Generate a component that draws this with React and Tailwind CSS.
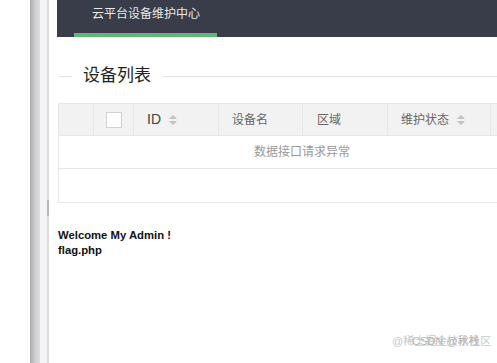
import React from "react";

const cjk = { fontFamily: '"Liberation Sans", "Noto Sans CJK SC", sans-serif' };

function SortIcon() {
  return (
    <span className="inline-flex flex-col items-center ml-[8px] gap-[2px]">
      <span className="w-0 h-0 border-x-[4px] border-x-transparent border-b-[4px] border-b-[#c2c2c2]" />
      <span className="w-0 h-0 border-x-[4px] border-x-transparent border-t-[4px] border-t-[#c2c2c2]" />
    </span>
  );
}

export default function App() {
  return (
    <div className="flex h-[363px] w-[497px] bg-white overflow-hidden relative" style={cjk}>
      {/* browser chrome strips on the left */}
      <div className="w-[30px] shrink-0 bg-white" />
      <div className="w-[10px] shrink-0 bg-gradient-to-r from-[#a9a9ae] via-[#cfcfd3] to-[#dcdce0]" />
      <div className="w-[7px] shrink-0 bg-[#f4f4f6]" />
      <div className="w-[2px] shrink-0 bg-[#dedede] flex flex-col">
        <div className="h-[200px]" />
        <div className="h-[16px] bg-[#b8b8b8]" />
      </div>
      <div className="w-[8px] shrink-0 bg-white" />

      <div className="flex-1 flex flex-col min-w-0">
        {/* top nav */}
        <div className="h-[37px] bg-[#393d49] flex items-stretch pl-[17px] shrink-0">
          <div className="relative w-[143px] flex items-start pt-[6px] pl-[18px] text-[12px] text-[#e8e8e8]">
            <span className="leading-[16px]">云平台设备维护中心</span>
            <div className="absolute left-0 right-0 bottom-0 h-[4px] bg-[#5fb878]" />
          </div>
        </div>

        {/* fieldset title */}
        <div className="mt-[28px] flex items-center pl-px">
          <div className="w-[14px] h-px bg-[#e6e6e6]" />
          <span className="px-[11px] text-[17px] leading-[22px] text-[#222]">设备列表</span>
          <div className="flex-1 h-px bg-[#e6e6e6]" />
        </div>

        {/* table */}
        <div className="mt-[16px] ml-px border-l border-[#e6e6e6]">
          <div className="flex h-[33px] bg-[#f2f2f2] border-y border-[#e6e6e6] text-[12px] text-[#666]">
            <div className="w-[35px] border-r border-[#e6e6e6]" />
            <div className="w-[40px] border-r border-[#e6e6e6] flex items-center justify-center">
              <div className="w-[16px] h-[16px] bg-white border border-[#d2d2d2]" />
            </div>
            <div className="w-[85px] border-r border-[#e6e6e6] flex items-center pl-[13px] text-[14px] text-[#444]">
              ID<SortIcon />
            </div>
            <div className="w-[84px] border-r border-[#e6e6e6] flex items-center pl-[13px]">设备名</div>
            <div className="w-[85px] border-r border-[#e6e6e6] flex items-center pl-[14px]">区域</div>
            <div className="w-[103px] border-r border-[#e6e6e6] flex items-center pl-[13px]">
              维护状态<SortIcon />
            </div>
            <div className="flex-1" />
          </div>
          <div className="h-[33px] border-b border-[#e6e6e6] flex items-center text-[12px] text-[#999] pl-[195px]">
            数据接口请求异常
          </div>
          <div className="h-[34px] border-b border-[#e6e6e6]" />
        </div>

        {/* output */}
        <div className="mt-[25px] ml-px text-[11.3px] font-bold text-[#111] leading-[15px]" style={{ fontFamily: '"Liberation Sans", Arial, sans-serif' }}>
          <div>Welcome My Admin !</div>
          <div>flag.php</div>
        </div>
      </div>

      {/* watermark */}
      <div className="absolute left-[392px] top-[334px] text-[11px] text-[#c8c8c8] leading-[14px]">@稀土掘金技术社区</div>
      <div className="absolute left-[412px] top-[334px] text-[11px] text-[#b4b4b4] leading-[14px]">CSDN @秋栈</div>
    </div>
  );
}
